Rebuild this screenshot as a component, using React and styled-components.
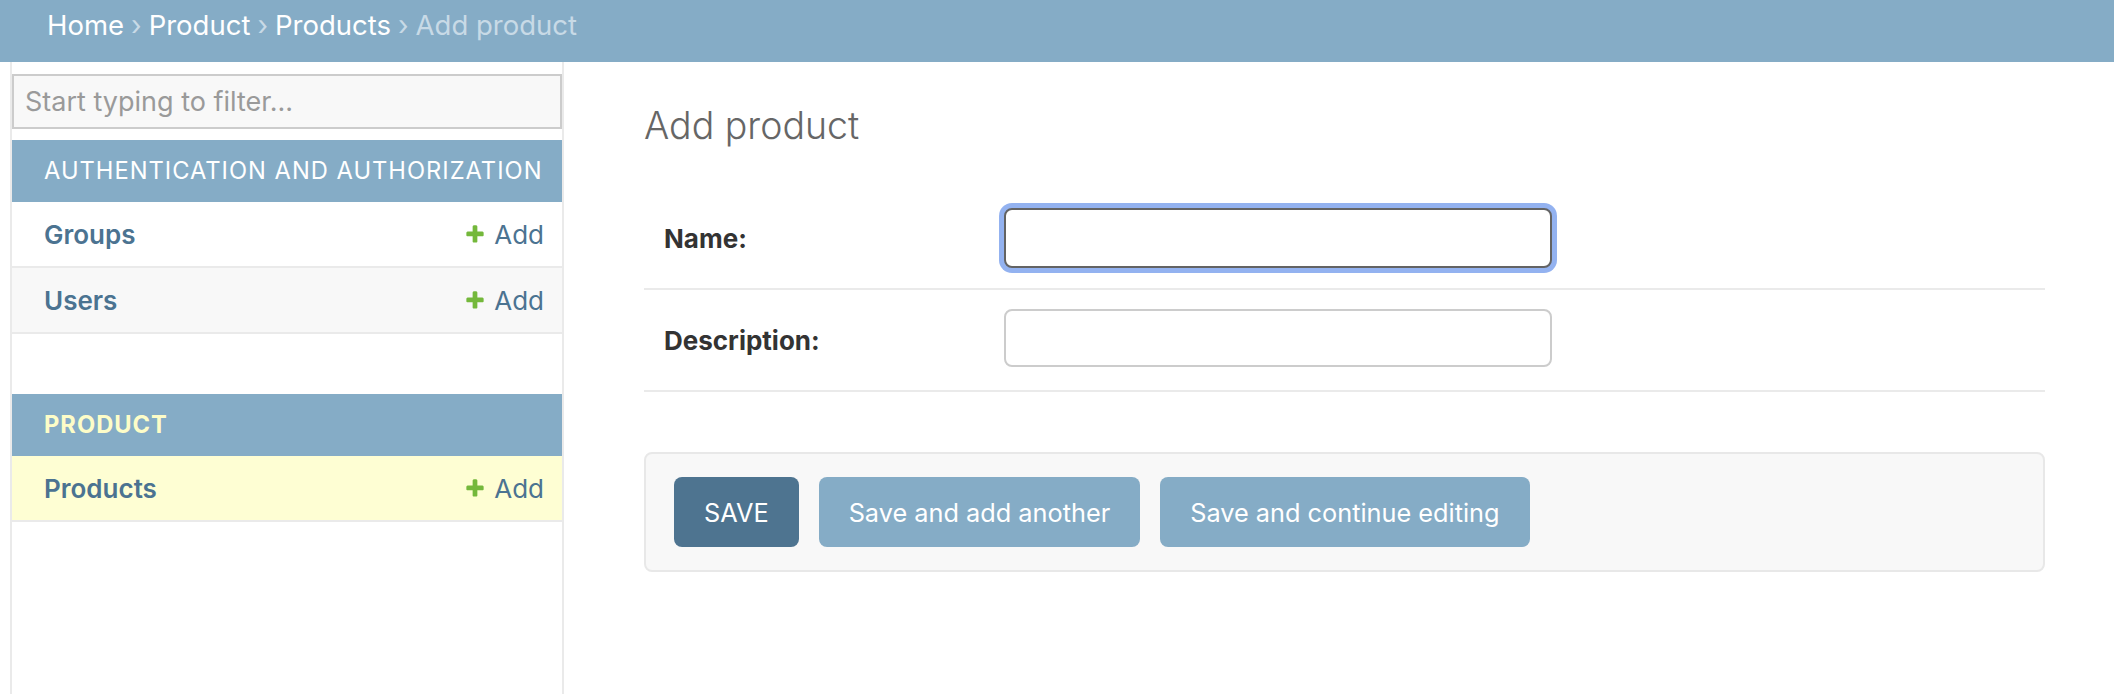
import React from 'react'
import styled, { createGlobalStyle } from 'styled-components'

const GlobalStyle = createGlobalStyle`
  html, body {
    margin: 0;
    padding: 0;
    background: #fff;
  }
  body {
    font-family: Inter, "Noto Sans", "Liberation Sans", sans-serif;
    color: #333;
  }
  * { box-sizing: border-box; }
`

const Page = styled.div`
  display: flex;
  flex-direction: column;
  min-height: 694px;
`

const Breadcrumbs = styled.div`
  background: #85acc6;
  padding: 9px 47px 21px;
  font-size: 27.5px;
  line-height: 32px;
  color: #c8dae6;
  white-space: nowrap;
`

const Crumb = styled.a`
  color: #fff;
  text-decoration: none;
`

const Sep = styled.span`
  color: #c8dae6;
  padding: 0 7px;
`

const Body = styled.div`
  flex: 1;
  display: flex;
`

const Toggle = styled.div`
  flex: 0 0 12px;
  border-right: 2px solid #eaeaea;
`

const Sidebar = styled.nav`
  flex: 0 0 552px;
  width: 552px;
  min-width: 0;
  overflow: hidden;
  border-right: 2px solid #eaeaea;
  padding-top: 12px;
`

const Filter = styled.input`
  display: block;
  width: 100%;
  height: 55px;
  margin: 0 0 11px;
  padding: 0 11px;
  border: 2px solid #cccccc;
  background: #f8f8f8;
  font-family: inherit;
  font-size: 27px;
  color: #333;
  outline: none;

  &::placeholder {
    color: #9a9a9a;
  }
`

const Module = styled.div`
  margin-bottom: 60px;
`

const Caption = styled.div`
  background: #85acc6;
  padding: 16px 0 16px 32px;
  font-size: 23.7px;
  line-height: 30px;
  letter-spacing: 1px;
  text-transform: uppercase;
  color: ${p => (p.$current ? '#fdfdc8' : '#fff')};
  font-weight: ${p => (p.$current ? 700 : 400)};
  white-space: nowrap;
`

const ModelRow = styled.div`
  display: flex;
  align-items: center;
  justify-content: space-between;
  height: 66px;
  padding: 0 18px 0 32px;
  border-bottom: 2px solid #eaeaea;
  background: ${p => (p.$current ? '#fefed3' : p.$alt ? '#f8f8f8' : '#fff')};
`

const ModelLink = styled.a`
  color: #4b7391;
  font-size: 26px;
  font-weight: 600;
  text-decoration: none;
`

const AddLink = styled.a`
  display: flex;
  align-items: center;
  gap: 8px;
  color: #4b7391;
  font-size: 26px;
  text-decoration: none;
`

const Content = styled.main`
  flex: 1;
  min-width: 0;
  padding: 40px 69px 40px 80px;
`

const Title = styled.h1`
  margin: 0 0 38px;
  font-size: 37.5px;
  line-height: 48px;
  font-weight: 300;
  color: #666;
`

const Fieldset = styled.fieldset`
  margin: 0 0 60px;
  padding: 0;
  border: none;
`

const FormRow = styled.div`
  display: flex;
  align-items: center;
  height: 102px;
  padding: 0 20px;
  border-bottom: 2px solid #eaeaea;
`

const Label = styled.label`
  flex: 0 0 340px;
  font-size: 26px;
  font-weight: 700;
  color: #333;
`

const TextInput = styled.input`
  width: 548px;
  height: ${p => (p.$focused ? '60px' : '58px')};
  padding: 0 12px;
  border: 2px solid ${p => (p.$focused ? '#636363' : '#cccccc')};
  border-radius: 8px;
  background: #fff;
  font-family: inherit;
  font-size: 26px;
  outline: none;
  box-shadow: ${p => (p.$focused ? '0 0 0 5px #93b2f0' : 'none')};
  margin-top: ${p => (p.$focused ? '0' : '-4px')};
`

const SubmitRow = styled.div`
  display: flex;
  gap: 20px;
  padding: 23px 28px;
  background: #f8f8f8;
  border: 2px solid #e8e8e8;
  border-radius: 8px;
`

const Button = styled.button`
  height: 70px;
  padding: 0 30px;
  border: none;
  border-radius: 8px;
  background: ${p => (p.$primary ? '#4e7490' : '#85acc6')};
  color: #fff;
  font-family: inherit;
  font-size: 25.3px;
  text-transform: ${p => (p.$primary ? 'uppercase' : 'none')};
  cursor: pointer;
`

const PlusIcon = () => (
  <svg width="22" height="22" viewBox="0 0 1792 1792">
    <path
      fill="#74b83b"
      d="M1600 796v192q0 40-28 68t-68 28h-416v416q0 40-28 68t-68 28h-192q-40 0-68-28t-28-68v-416h-416q-40 0-68-28t-28-68v-192q0-40 28-68t68-28h416v-416q0-40 28-68t68-28h192q40 0 68 28t28 68v416h416q40 0 68 28t28 68z"
    />
  </svg>
)

const apps = [
  {
    name: 'Authentication and Authorization',
    models: ['Groups', 'Users'],
  },
  {
    name: 'Product',
    current: true,
    models: ['Products'],
  },
]

export default function App() {
  return (
    <Page>
      <GlobalStyle />
      <Breadcrumbs>
        <Crumb href="#">Home</Crumb>
        <Sep>›</Sep>
        <Crumb href="#">Product</Crumb>
        <Sep>›</Sep>
        <Crumb href="#">Products</Crumb>
        <Sep>›</Sep>
        Add product
      </Breadcrumbs>
      <Body>
        <Toggle />
        <Sidebar>
          <Filter placeholder="Start typing to filter..." />
          {apps.map(app => (
            <Module key={app.name}>
              <Caption $current={app.current}>{app.name}</Caption>
              {app.models.map((m, i) => (
                <ModelRow key={m} $alt={i % 2 === 1} $current={app.current}>
                  <ModelLink href="#">{m}</ModelLink>
                  <AddLink href="#">
                    <PlusIcon />
                    Add
                  </AddLink>
                </ModelRow>
              ))}
            </Module>
          ))}
        </Sidebar>
        <Content>
          <Title>Add product</Title>
          <Fieldset>
            <FormRow>
              <Label>Name:</Label>
              <TextInput $focused />
            </FormRow>
            <FormRow>
              <Label>Description:</Label>
              <TextInput />
            </FormRow>
          </Fieldset>
          <SubmitRow>
            <Button $primary>Save</Button>
            <Button>Save and add another</Button>
            <Button>Save and continue editing</Button>
          </SubmitRow>
        </Content>
      </Body>
    </Page>
  )
}
